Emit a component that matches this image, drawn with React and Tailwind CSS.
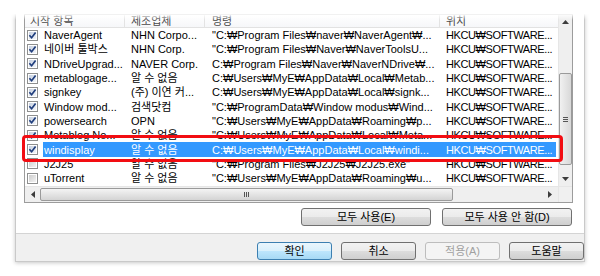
import React from 'react';

const ROWS = [
  [true, 'NaverAgent', 'NHN Corpo...', '"C:₩Program Files₩naver₩NaverAgent₩...'],
  [true, '네이버 툴박스', 'NHN Corp.', '"C:₩Program Files₩Naver₩NaverToolsU...'],
  [true, 'NDriveUpgrad...', 'NAVER Corp.', 'C:₩Program Files₩Naver₩NaverNDrive₩...'],
  [true, 'metablogage...', '알 수 없음', 'C:₩Users₩MyE₩AppData₩Local₩Metab...'],
  [true, 'signkey', '(주) 이연 커...', 'C:₩Users₩MyE₩AppData₩Local₩signk...'],
  [true, 'Window mod...', '검색닷컴', '"C:₩ProgramData₩Window modus₩Wind...'],
  [true, 'powersearch', 'OPN', '"C:₩Users₩MyE₩AppData₩Roaming₩p...'],
  [true, 'Metablog No...', '알 수 없음', '"C:₩Users₩MyE₩AppData₩Local₩Meta...'],
  [true, 'windisplay', '알 수 없음', 'C:₩Users₩MyE₩AppData₩Local₩windi...'],
  [false, 'J2J25', '알 수 없음', '"C:₩Program Files₩J2J25₩J2J25.exe"'],
  [false, 'uTorrent', '알 수 없음', '"C:₩Users₩MyE₩AppData₩Roaming₩u...'],
];

const SELECTED = 8;

const Check = ({ on }) => (
  <span className="relative flex h-[11px] w-[11px] items-center justify-center border border-[#8e8f8f] bg-white">
    <span
      className={
        on
          ? 'h-[7px] w-[7px] bg-linear-to-br from-[#c6d0e0] to-[#f3f5f9]'
          : 'h-[7px] w-[7px] bg-linear-to-br from-[#cdcdcd] to-[#f3f3f3]'
      }
    />
    {on && (
      <svg className="absolute inset-0" width="9" height="9" viewBox="0 0 9 9">
        <path d="M1.4 4.3 L3.6 6.7 L7.6 1.6" fill="none" stroke="#1f3d7c" strokeWidth="1.7" />
      </svg>
    )}
  </span>
);

const Btn = ({ children, w, kind }) => {
  let cls = 'border-[#707070] bg-[linear-gradient(#f2f2f2,#ebebeb_50%,#dddddd_50%,#cfcfcf)] text-black';
  if (kind === 'default') cls = 'border-[#3c7fb1] bg-[linear-gradient(#eaf6fd,#d9f0fc_50%,#bee6fd_50%,#a7d9f5)] text-black';
  if (kind === 'disabled') cls = 'border-[#bdbdbd] bg-[#f4f4f4] text-[#a0a0a0]';
  return (
    <div className={`flex h-[18px] shrink-0 items-center justify-center rounded-[3px] border leading-none ${w} ${cls}`}>
      {children}
    </div>
  );
};

const Tri = ({ dir }) => {
  const pts = {
    up: '0,4 3.5,0 7,4',
    down: '0,0 3.5,4 7,0',
    left: '4,0 0,3.5 4,7',
    right: '0,0 4,3.5 0,7',
  }[dir];
  const vert = dir === 'up' || dir === 'down';
  return (
    <svg width={vert ? 7 : 4} height={vert ? 4 : 7} viewBox={vert ? '0 0 7 4' : '0 0 4 7'}>
      <polygon points={pts} fill="#3c3c3c" />
    </svg>
  );
};

const VScroll = () => (
  <div className="flex w-[14px] shrink-0 flex-col border-l border-[#e6e6e6] bg-[#efefef]">
    <div className="flex h-[14px] items-center justify-center">
      <Tri dir="up" />
    </div>
    <div className="flex flex-1 flex-col pt-[44px]">
      <div className="flex h-[92px] flex-col items-center justify-center gap-[1px] rounded-[2px] border border-[#9a9a9a] bg-linear-to-r from-[#f1f1f1] to-[#d8d8d8]">
        <span className="h-[1px] w-[5px] bg-[#555]" />
        <span className="h-[1px] w-[5px] bg-[#555]" />
        <span className="h-[1px] w-[5px] bg-[#555]" />
      </div>
    </div>
    <div className="flex h-[14px] items-center justify-center">
      <Tri dir="down" />
    </div>
  </div>
);

const HScroll = () => (
  <div className="flex h-[16px] w-[533px] border-t border-[#e6e6e6] bg-[#efefef]">
    <div className="flex w-[15px] items-center justify-center">
      <Tri dir="left" />
    </div>
    <div className="flex flex-1 items-stretch py-[1px]">
      <div className="flex w-[413px] items-center justify-center gap-[1px] rounded-[2px] border border-[#9a9a9a] bg-linear-to-b from-[#f4f4f4] to-[#d4d4d4]">
        <span className="h-[5px] w-[1px] bg-[#555]" />
        <span className="h-[5px] w-[1px] bg-[#555]" />
        <span className="h-[5px] w-[1px] bg-[#555]" />
      </div>
    </div>
    <div className="flex w-[17px] items-center justify-center">
      <Tri dir="right" />
    </div>
  </div>
);

export default function App() {
  return (
    <div className="relative h-[276px] w-[600px] overflow-hidden bg-white font-[family-name:'Liberation_Sans','Noto_Sans_CJK_KR',sans-serif] text-[11px] text-black">
      <div className="ml-[15px] flex h-[262px] w-[570px] flex-col border-x border-b border-[#c9c9c9] shadow-[0_1px_4px_rgba(0,0,0,0.22)]">
        {/* panel */}
        <div className="flex flex-col border-b border-[#d4d4d4] bg-white pb-[7px] pl-[8px] pr-[11px] pt-[14px]">
          <div className="flex h-[189px] w-[549px] flex-col border border-[#9c9c9c] bg-white">
            <div className="flex min-h-0 flex-1">
              <div className="flex w-[533px] flex-col overflow-hidden">
                {/* header */}
                <div className="flex h-[13px] shrink-0 border-b border-[#e2e2e2] bg-linear-to-b from-white to-[#f6f7f9] leading-[12px] text-[#4a4a4a]">
                  <div className="w-[100px] border-r border-[#e3e3e3] pl-[5px]">시작 항목</div>
                  <div className="w-[80px] border-r border-[#e3e3e3] pl-[6px]">제조업체</div>
                  <div className="w-[235px] border-r border-[#e3e3e3] pl-[7px]">명령</div>
                  <div className="flex-1 pl-[6px]">위치</div>
                </div>
                {/* rows */}
                {ROWS.map(([on, name, maker, cmd], i) => {
                  const sel = i === SELECTED;
                  return (
                    <div key={name} className="flex h-[14.3px] shrink-0 items-center leading-[14px]">
                      <div className="flex w-[18px] shrink-0 pl-[2px]">
                        <Check on={on} />
                      </div>
                      <div className={sel ? 'flex h-full items-center bg-[#3399ff] text-white' : 'flex h-full items-center'}>
                        <div className="w-[82px] overflow-hidden whitespace-nowrap pl-[1px]">{name}</div>
                        <div className="w-[80px] overflow-hidden whitespace-nowrap pl-[6px]">{maker}</div>
                        <div className="w-[235px] overflow-hidden whitespace-nowrap pl-[7px]">{cmd}</div>
                        <div className="w-[116px] whitespace-nowrap pl-[6px] tracking-[-0.4px]">HKCU₩SOFTWARE...</div>
                      </div>
                    </div>
                  );
                })}
              </div>
              <VScroll />
            </div>
            <div className="flex">
              <HScroll />
              <div className="w-[14px] border-t border-l border-[#e6e6e6] bg-[#f0f0f0]" />
            </div>
          </div>
          <div className="mr-[1px] mt-[5px] flex justify-end gap-[11px]">
            <Btn w="w-[130px]">모두 사용(E)</Btn>
            <Btn w="w-[130px]">모두 사용 안 함(D)</Btn>
          </div>
        </div>
        {/* bottom bar */}
        <div className="flex flex-1 justify-end gap-[9px] bg-[#f0f0f0] pt-[8px]">
          <Btn w="w-[75px]" kind="default">확인</Btn>
          <Btn w="w-[75px]">취소</Btn>
          <Btn w="w-[75px]" kind="disabled">적용(A)</Btn>
          <Btn w="w-[75px]">도움말</Btn>
        </div>
      </div>

      {/* highlight marker */}
      <div className="absolute left-[22px] top-[135px] h-[27px] w-[541px] rounded-[4px] border-[3px] border-[#f20d12]" />
      {/* faded top edge */}
      <div className="absolute left-0 top-0 h-[20px] w-full bg-linear-to-b from-white from-[68%] to-white/0" />
    </div>
  );
}
